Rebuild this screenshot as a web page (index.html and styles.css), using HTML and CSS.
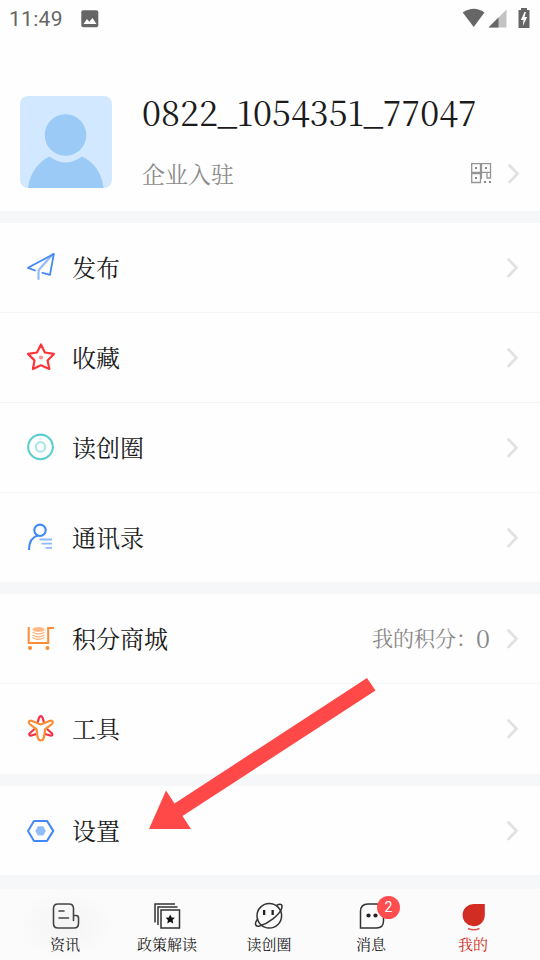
FILE: index.html
```html
<!DOCTYPE html>
<html lang="zh-CN">
<head>
<meta charset="utf-8">
<title>我的</title>
<link rel="stylesheet" href="styles.css">
</head>
<body>
<svg class="defs" width="0" height="0"><symbol id="chevron" viewBox="0 0 14 22"><path d="M2.500 2.500 10.500 10.800 2.500 19.100" fill="none" stroke="#e2e2e2" stroke-width="2.800" stroke-linecap="round"/></symbol></svg>
<div class="screen">
  <header class="status">
    <span class="clock">11:49</span>
    <svg class="photo" width="18" height="18" viewBox="0 0 18 18"><rect x=".3" y=".3" width="17" height="17" rx="2" fill="#666"/><path d="M2.500 14 6 9l2.200 2.700L11.500 8l4 6z" fill="#fff"/></svg>
    <svg class="signals" width="70" height="22" viewBox="0 0 70 22"><g fill="#666"><path d="M.7 4.500Q12 -3 22.500 4.500L11.700 19z"/><path d="M26.500 19.500 44.500 1.500v18z" fill="#c3c3c3"/><path d="M26.500 19.500 36.500 9.500v10z"/><path d="M59 0h6v2h2.500v18H56.500V2H59z"/></g><path d="m62.500 4-3.600 8h2.600l-.7 6 4.400-9h-2.700l1.500-5z" fill="#fff"/></svg>
  </header>
  <section class="profile">
    <svg class="avatar" width="92" height="92" viewBox="0 0 92 92"><rect width="92" height="92" rx="8" fill="#d2e8ff"/><path d="M8 92C10 77 18 66 29.500 60.500q16 12 32.500 0C74 66 82 77 83.500 92z" fill="#9bcaf7"/><circle cx="45.500" cy="39" r="20.800" fill="#9bcaf7"/></svg>
    <div class="identity">
      <h1>0822_1054351_77047</h1>
      <div class="company"><span>企业入驻</span>
        <svg class="qr" width="22" height="22" viewBox="0 0 22 22"><g fill="none" stroke="#959595" stroke-width="1.300"><path d="M1.700 1.700h8.800v8.600H1.700zM11.500 1.700h9v8.600h-9zM1.700 11.500h8.800v9H1.700zM17 11v5h3.500v-5M11.500 11v6"/></g><g fill="#888"><path d="M5 5h2v2H5zM15 5h2v2h-2zM5 15h2v2H5zM14 19h2v2h-2zM19 19h2v2h-2z"/></g></svg>
        <svg class="chevron"><use href="#chevron"/></svg></div>
    </div>
  </section>
  <main>
    <section class="group">
      <div class="row">
        <svg class="icon" viewBox="0 0 30 30"><g fill="none" stroke-width="1.800" stroke-linejoin="round" stroke-linecap="round"><path d="M27 2 14 16.500Q12.500 18 12.500 20v7" stroke="#91bcfa" stroke-width="2.200"/><path d="M9 18.500 2 15.800 27.800 2 24 22.800 16.500 20.800" stroke="#4389f5"/></g></svg>
        <span class="label">发布</span><svg class="chevron"><use href="#chevron"/></svg>
      </div>
      <div class="row">
        <svg class="icon" viewBox="0 0 30 30"><path d="m15 2.500 3.900 8 9 1.400-6.300 6.500L23.300 27 15 23.300 6.900 27 8.500 18.400 2 11.900l9-1.400z" fill="none" stroke="#fb3539" stroke-width="2.200" stroke-linejoin="round"/><circle cx="15" cy="15.500" r="2.100" fill="#ff9090"/></svg>
        <span class="label">收藏</span><svg class="chevron"><use href="#chevron"/></svg>
      </div>
      <div class="row">
        <svg class="icon" viewBox="0 0 30 30"><circle cx="14.500" cy="14.900" r="12.300" fill="none" stroke="#5bcece" stroke-width="2.100"/><circle cx="14.500" cy="14.900" r="4.700" fill="none" stroke="#abe7e7" stroke-width="2.200"/></svg>
        <span class="label">读创圈</span><svg class="chevron"><use href="#chevron"/></svg>
      </div>
      <div class="row">
        <svg class="icon" viewBox="0 0 30 30"><g fill="none" stroke="#4389f5" stroke-width="2.100"><circle cx="14" cy="8.300" r="5.700"/><path d="M12 13.300Q3 16 3 28"/></g><path d="M13.500 17.500H26M15.500 21.600H26M19.500 25.900H26" stroke="#8dbafa" stroke-width="1.900"/></svg>
        <span class="label">通讯录</span><svg class="chevron"><use href="#chevron"/></svg>
      </div>
    </section>
    <section class="group">
      <div class="row">
        <svg class="icon" viewBox="0 0 30 30"><path d="M2.700 3v16h19.500V4H28" fill="none" stroke="#fb8b36" stroke-width="2"/><ellipse cx="12.500" cy="5.500" rx="6" ry="2.500" fill="#ffb987"/><path d="M6.500 8q6 4 12 0M6.500 11q6 4 12 0M6.500 13.500q6 4 12 0" fill="none" stroke="#ffb47d" stroke-width="1.500"/><g fill="#fb8b36"><circle cx="4" cy="24" r="2"/><circle cx="21.500" cy="24" r="2"/></g></svg>
        <span class="label">积分商城</span><span class="points">我的积分：<b>0</b></span><svg class="chevron"><use href="#chevron"/></svg>
      </div>
      <div class="row">
        <svg class="icon" viewBox="0 0 30 30"><g fill="none" stroke-width="2.200" stroke-linejoin="round" stroke-linecap="round"><path d="M11.600 8.500 13 3.700Q14.800 .6 16.600 3.700L18 8.500M8 15.500 3.500 19.500Q2.500 22 5.500 21.500L10.500 20M21.600 15.500 26.100 19.500Q27.100 22 24.100 21.500L19.100 20" stroke="#fa2e43"/><path d="M14.800 10.500 23.500 7Q26.500 6 26.800 8 27 9.500 24.500 11.200L19 15.300 18.300 21.500Q17.500 26.500 14.800 26.500T11.300 21.500L10.600 15.300 5.100 11.200Q2.600 9.500 2.800 8 3.100 6 6.100 7z" stroke="#fb8d35"/></g></svg>
        <span class="label">工具</span><svg class="chevron"><use href="#chevron"/></svg>
      </div>
    </section>
    <section class="group">
      <div class="row">
        <svg class="icon" viewBox="0 0 30 30"><path d="M8 4.900h13l6.300 10-6.300 10H8l-6-10z" fill="none" stroke="#4389f5" stroke-width="2" stroke-linejoin="round"/><path d="M12 10.300h5.200l2.700 4.600-2.700 4.600h-5.200l-2.700-4.600z" fill="#91bcfa"/></svg>
        <span class="label">设置</span><svg class="chevron"><use href="#chevron"/></svg>
      </div>
    </section>
  </main>
  <nav class="tabs">
    <div class="tab"><svg viewBox="0 0 32 30"><g fill="none" stroke="#444" stroke-width="1.600" stroke-linecap="round"><path d="M24.500 19.500V7.500q0-4.500-4.500-4.500H9Q4.500 3 4.500 7.500v15Q4.500 27 9 27h16q4.500 0 4.500-4.500V17q0-2.500-2.500-2.500h-2.500"/><path d="M10 10h5M10 17h9.500"/></g></svg><span>资讯</span></div>
    <div class="tab"><svg viewBox="0 0 32 30"><g fill="none" stroke="#333" stroke-width="1.500"><path d="M3 21.500V3h20M6 24V6h19.500"/><path d="M9 9h18.500v18H9z"/></g><path d="m18.200 13.500 1.500 2.900 3.200.4-2.300 2.300.6 3.300-3-1.700-2.900 1.700.6-3.300-2.300-2.300 3.200-.4z" fill="#111"/></svg><span>政策解读</span></div>
    <div class="tab"><svg viewBox="0 0 32 30"><g fill="none" stroke="#333" stroke-width="1.500"><circle cx="15.300" cy="14.800" r="12.300"/><path d="M4 17.500C0 22.500 1 26 5.500 25 14.500 22.500 25 14 27.500 8 29 3.500 27 2 22.500 4.500"/></g><path d="M9 9h2.300v5H9zM17.500 9h2.300v5h-2.300z" fill="#222"/></svg><span>读创圈</span></div>
    <div class="tab"><svg viewBox="0 0 32 30"><path d="M12 3h8.500q7 0 7 7v10q0 7-7 7h-16V10.500Q4.500 3 12 3z" fill="none" stroke="#333" stroke-width="1.500"/><circle cx="12.500" cy="14.500" r="2.100" fill="#222"/><circle cx="19.500" cy="14.500" r="2.100" fill="#222"/></svg><i class="badge">2</i><span>消息</span></div>
    <div class="tab active"><svg viewBox="0 0 32 30"><path d="M16 3h10.800v11A11.100 11.100 0 1 1 16 3z" fill="#d22d23"/><path d="M10 27.500q5.500 2.500 11.500 0" stroke="#d75750" stroke-width="1.500" fill="none"/></svg><span>我的</span></div>
  </nav>
  <svg class="arrow" width="228" height="154" viewBox="0 0 228 154"><path d="M0 151 17 112.500 25.500 125.500 218 0 226.500 12.500 33.500 138 42 151z" fill="#ff4848"/></svg>
</div>
</body>
</html>
```
FILE: styles.css
```css
* { box-sizing: border-box; }
body { margin: 0; background: #f6f7f9; color: #1b1b1b; font-family: "Noto Serif CJK SC", "Liberation Serif", "Noto Sans CJK SC", serif; font-weight: 400; }
.defs { position: absolute; }
.screen { position: relative; width: 540px; height: 960px; overflow: hidden; display: flex; flex-direction: column; }
.status { height: 38px; flex: none; background: #fefefe; display: flex; align-items: center; padding: 0 8px 0 9px; }
.clock { font: 400 21px Roboto, sans-serif; letter-spacing: .3px; color: #666; width: 72px; }
.photo { margin-top: -1px; }
.signals { margin-left: auto; margin-top: -1px; }
.profile { height: 173px; flex: none; background: #fefefe; padding: 58px 20px 0; display: flex; gap: 30px; }
.avatar { flex: none; }
.identity { flex: 1; }
h1 { margin: -5px 0 0; font-size: 34px; line-height: 42px; font-weight: 400; white-space: nowrap; }
.company { display: flex; align-items: center; height: 32px; margin-top: 25px; font-size: 23px; line-height: 32px; color: #8b8b8b; }
.company span { margin-top: -1px; }
.qr { margin-left: auto; margin-right: 15px; margin-top: -2px; }
.chevron { width: 14px; height: 22px; flex: none; }
.company .chevron { margin-right: -1px; margin-top: -1px; }
.group { margin-top: 12px; background: #fefefe; }
.row { height: 90px; display: flex; align-items: center; padding: 0 20px 0 26px; border-bottom: 1px solid #f4f4f4; }
.group:first-child .row:last-child, .group:last-child .row { height: 89px; }
.row:last-child { border-bottom: 0; }
.icon { width: 30px; height: 30px; margin-right: 16px; flex: none; }
.group:first-child .icon { margin-top: -1px; }
.label { font-size: 24px; line-height: 36px; margin-top: -2px; }
.row > .chevron { margin-left: auto; }
.row > .points { margin-left: auto; margin-top: -3px; font-size: 21px; line-height: 30px; color: #888; display: flex; align-items: center; font-weight: 400; }
.points b { font-size: 25px; font-weight: 400; margin-left: -1px; }
.row > .points + .chevron { margin-left: 16px; }
.tabs { height: 71px; margin-top: auto; background: #fbfbfb; display: flex; padding: 0 16px 0 14px; }
.tab { position: relative; flex: 1; display: flex; flex-direction: column; align-items: center; padding-top: 12px; font-size: 15px; }
.tab > svg { width: 32px; height: 30px; }
.tab:not(:first-child) > svg { margin-left: 1px; }
.tab > span { line-height: 22px; margin-top: 2px; }
.tab:first-child { background: radial-gradient(ellipse at center, #f4f4f4, #fbfbfb 70%); }
.badge { position: absolute; left: 57px; top: 7px; width: 23px; height: 23px; border-radius: 50%; background: #ff4d50; color: #fff; font: 400 14px/23px Roboto, sans-serif; text-align: center; }
.active { color: #d22d23; }
.arrow { position: absolute; left: 149px; top: 678px; }
```
